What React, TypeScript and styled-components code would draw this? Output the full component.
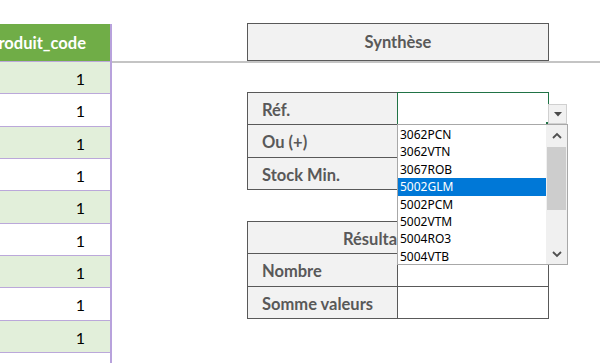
import React from 'react';
import styled, { createGlobalStyle } from 'styled-components';

const GlobalStyle = createGlobalStyle`
  html, body {
    margin: 0;
    padding: 0;
    background: #fff;
  }
  body {
    font-family: Lato, 'Open Sans', sans-serif;
  }
`;

const ROW = 32.33;
const LINE = '#595959';

const codes = [1, 1, 1, 1, 1, 1, 1, 1, 1, 1];
const refs = ['3062PCN', '3062VTN', '3067ROB', '5002GLM', '5002PCM', '5002VTM', '5004RO3', '5004VTB'];

const Sheet = styled.div`
  display: flex;
  width: 600px;
  height: 363px;
  overflow: hidden;
  background: #fff;
`;

const CodeColumn = styled.div`
  width: 112px;
  flex-shrink: 0;
  padding-top: 24px;
`;

const CodeTable = styled.div`
  border-right: 2px solid #b8a2dc;
`;

const CodeHeader = styled.div`
  height: 37px;
  display: flex;
  align-items: center;
  justify-content: flex-end;
  padding-right: 24px;
  overflow: hidden;
  white-space: nowrap;
  background: #70ad47;
  color: #fff;
  font-weight: 700;
  font-size: 16.5px;
`;

const CodeRow = styled.div<{ $shaded: boolean }>`
  box-sizing: border-box;
  height: ${ROW}px;
  display: flex;
  align-items: center;
  justify-content: flex-end;
  padding: 2px 25px 0 0;
  border-top: 1px solid #bba8da;
  background: ${({ $shaded }) => ($shaded ? '#e2efda' : '#fff')};
  color: #000;
  font-size: 16px;
`;

const Workspace = styled.div`
  flex: 1;
  display: flex;
  flex-direction: column;
`;

const TopBand = styled.div`
  height: 38px;
  padding: 23px 0 0 135px;
  border-bottom: 2px solid #c4c4c4;
`;

const SummaryTitle = styled.div`
  box-sizing: border-box;
  width: 302px;
  height: 38px;
  display: flex;
  align-items: center;
  justify-content: center;
  border: 1px solid ${LINE};
  background: #f2f2f2;
  color: ${LINE};
  font-weight: 700;
  font-size: 16.5px;
`;

const FormGrid = styled.div<{ $gap: number }>`
  display: grid;
  grid-template-columns: 150px 151px;
  grid-auto-rows: ${ROW}px;
  width: 301px;
  margin: ${({ $gap }) => $gap}px 0 0 135px;
  border-top: 1px solid ${LINE};
  border-left: 1px solid ${LINE};
`;

const Cell = styled.div`
  box-sizing: border-box;
  position: relative;
  border-right: 1px solid ${LINE};
  border-bottom: 1px solid ${LINE};
  background: #fff;
`;

const LabelCell = styled(Cell)`
  display: flex;
  align-items: center;
  padding: 3px 0 0 14px;
  background: #f2f2f2;
  color: ${LINE};
  font-weight: 700;
  font-size: 16.5px;
  white-space: nowrap;
`;

const MergedCell = styled(LabelCell)`
  grid-column: 1 / 3;
  padding-left: 95px;
`;

const SelectionFrame = styled.div`
  position: absolute;
  inset: -1px;
  border: 1px solid #217346;
  pointer-events: none;
`;

const FillHandle = styled.span`
  position: absolute;
  right: -2px;
  bottom: -2px;
  width: 4px;
  height: 4px;
  background: #217346;
`;

const DropButton = styled.div`
  position: absolute;
  left: 150px;
  top: 11px;
  box-sizing: border-box;
  width: 19px;
  height: 20px;
  display: flex;
  align-items: center;
  justify-content: center;
  background: #f1f1f1;
  border: 1px solid #d0d0d0;
`;

const DropList = styled.div`
  position: absolute;
  left: -1px;
  top: 31px;
  z-index: 10;
  box-sizing: border-box;
  width: 171px;
  height: 141px;
  display: flex;
  background: #fff;
  border: 1px solid #a8a8a8;
`;

const Items = styled.div`
  flex: 1;
  padding-top: 1px;
  overflow: hidden;
`;

const Item = styled.div<{ $active?: boolean }>`
  height: 17.4px;
  line-height: 17.4px;
  padding-left: 2px;
  font-family: 'Noto Sans', 'Open Sans', sans-serif;
  font-size: 12px;
  color: ${({ $active }) => ($active ? '#fff' : '#000')};
  background: ${({ $active }) => ($active ? '#0078d7' : 'transparent')};
`;

const ScrollBar = styled.div`
  width: 21px;
  display: flex;
  flex-direction: column;
  background: #f0f0f0;
`;

const ScrollArrow = styled.div`
  height: 20px;
  display: flex;
  align-items: center;
  justify-content: center;
`;

const ScrollTrack = styled.div`
  flex: 1;
  padding-top: 2px;
`;

const ScrollThumb = styled.div`
  height: 63px;
  margin: 0 1px;
  background: #cdcdcd;
`;

const Chevron = ({ up }: { up?: boolean }) => (
  <svg width="10" height="7" viewBox="0 0 10 7">
    <polyline
      points={up ? '1,6 5,2 9,6' : '1,1 5,5 9,1'}
      fill="none"
      stroke="#505050"
      strokeWidth="1.8"
    />
  </svg>
);

const Caret = () => (
  <svg width="8" height="5" viewBox="0 0 8 5">
    <polygon points="0,0 8,0 4,4.5" fill="#4a4a4a" />
  </svg>
);

export default function App() {
  return (
    <>
      <GlobalStyle />
      <Sheet>
        <CodeColumn>
          <CodeTable>
            <CodeHeader>Produit_code</CodeHeader>
            {codes.map((c, i) => (
              <CodeRow key={i} $shaded={i % 2 === 0}>
                {c}
              </CodeRow>
            ))}
          </CodeTable>
        </CodeColumn>

        <Workspace>
          <TopBand>
            <SummaryTitle>Synthèse</SummaryTitle>
          </TopBand>

          <FormGrid $gap={29}>
            <LabelCell>Réf.</LabelCell>
            <Cell>
              <SelectionFrame>
                <FillHandle />
              </SelectionFrame>
              <DropButton>
                <Caret />
              </DropButton>
              <DropList>
                <Items>
                  {refs.map((r) => (
                    <Item key={r} $active={r === '5002GLM'}>
                      {r}
                    </Item>
                  ))}
                </Items>
                <ScrollBar>
                  <ScrollArrow>
                    <Chevron up />
                  </ScrollArrow>
                  <ScrollTrack>
                    <ScrollThumb />
                  </ScrollTrack>
                  <ScrollArrow>
                    <Chevron />
                  </ScrollArrow>
                </ScrollBar>
              </DropList>
            </Cell>
            <LabelCell>Ou (+)</LabelCell>
            <Cell />
            <LabelCell>Stock Min.</LabelCell>
            <Cell />
          </FormGrid>

          <FormGrid $gap={31}>
            <MergedCell>Résultats</MergedCell>
            <LabelCell>Nombre</LabelCell>
            <Cell />
            <LabelCell>Somme valeurs</LabelCell>
            <Cell />
          </FormGrid>
        </Workspace>
      </Sheet>
    </>
  );
}
